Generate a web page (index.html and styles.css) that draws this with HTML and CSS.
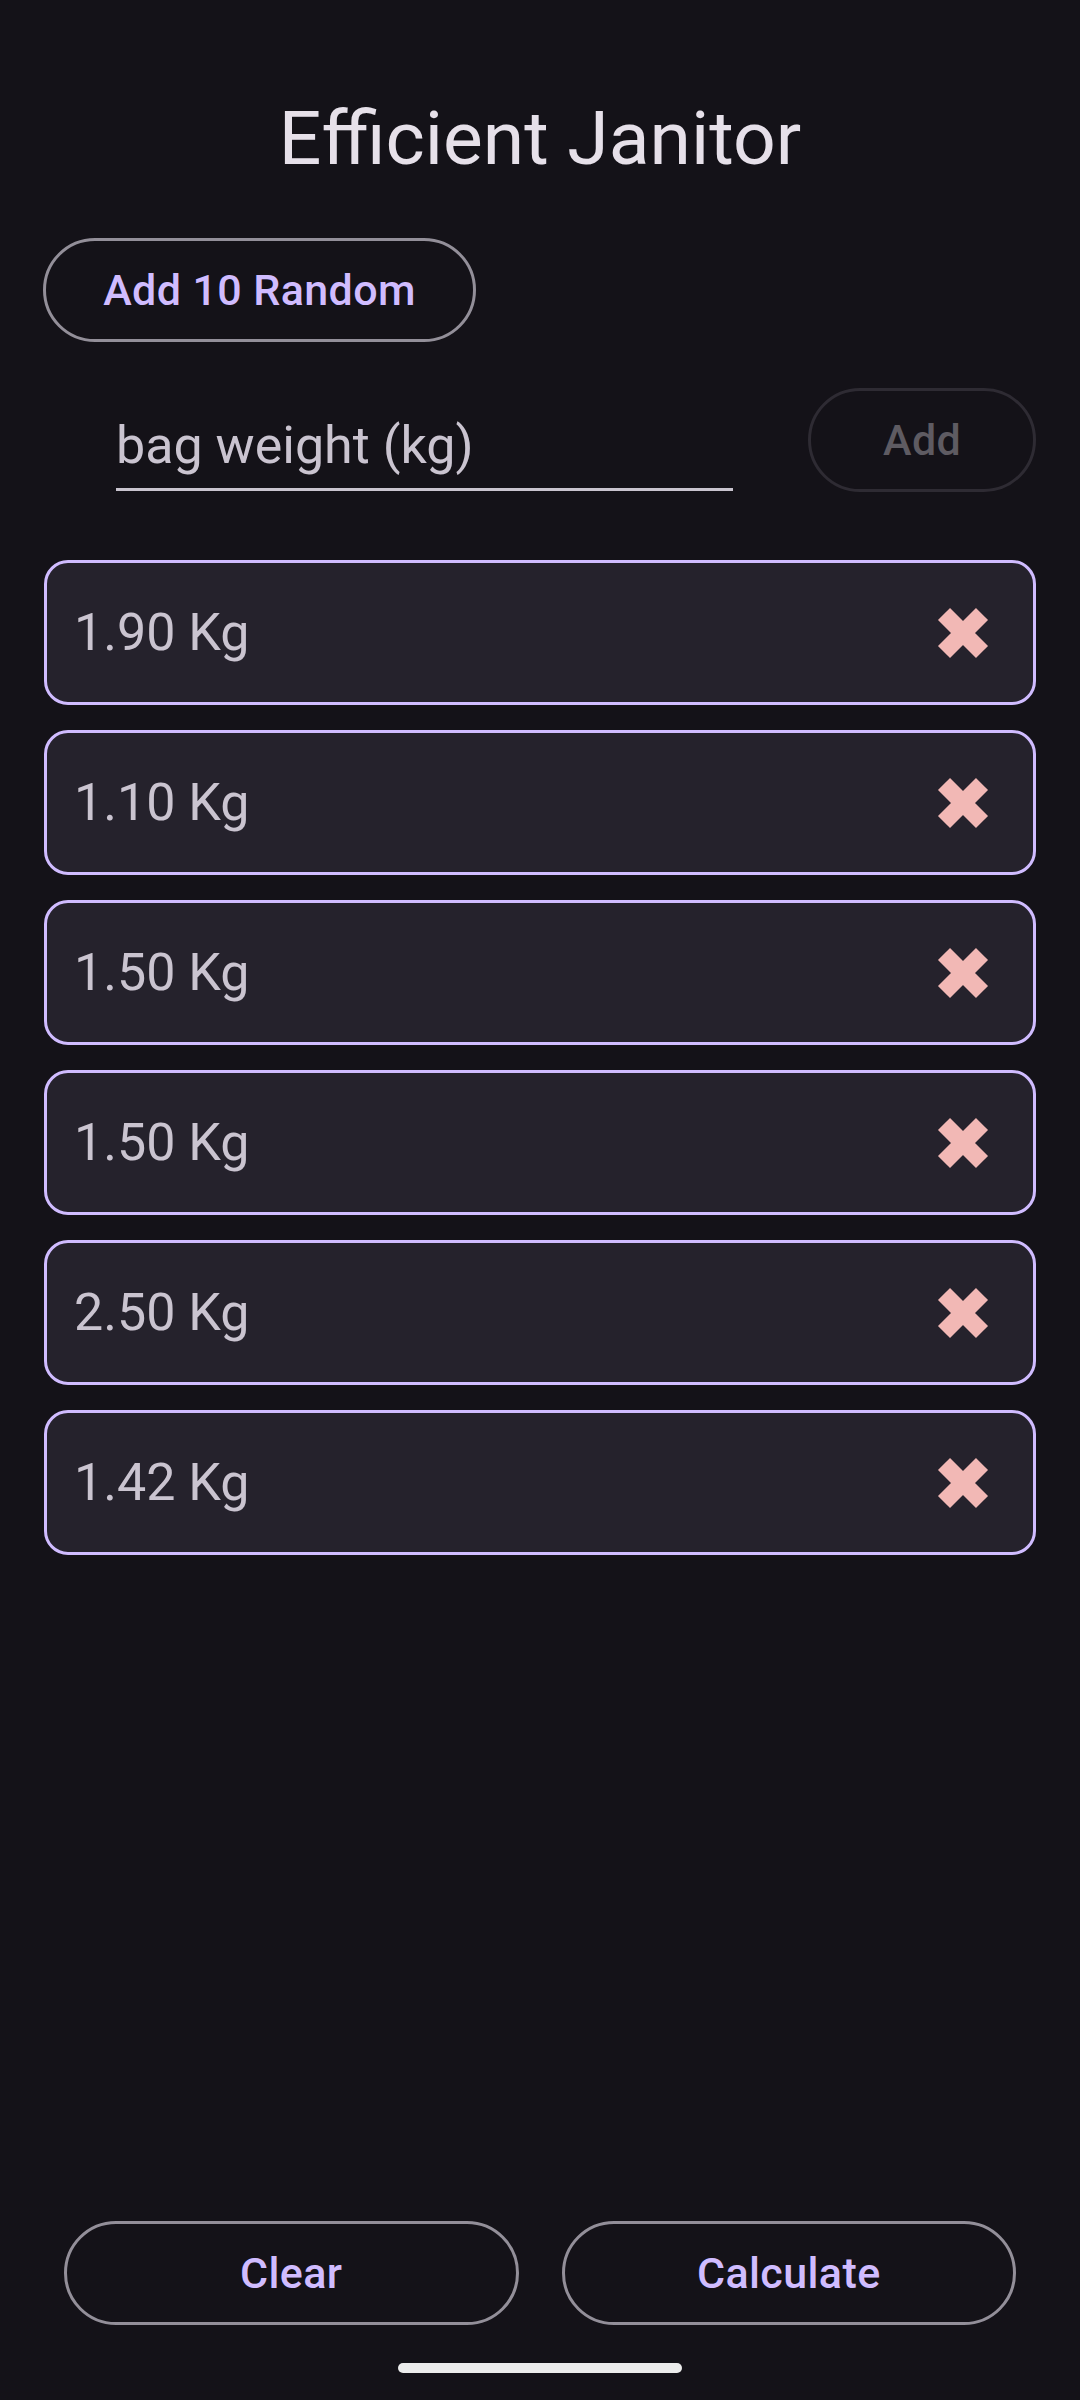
FILE: index.html
```html
<!DOCTYPE html>
<html>
<head>
<meta charset="utf-8">
<link rel="stylesheet" href="styles.css">
</head>
<body>
<div class="page">
  <h1 class="title">Efficient Janitor</h1>
  <div class="top-actions">
    <button class="btn btn-outline random">Add 10 Random</button>
  </div>
  <div class="input-row">
    <div class="field"><span class="placeholder">bag weight (kg)</span></div>
    <button class="btn btn-disabled add">Add</button>
  </div>
  <ul class="list">
    <li class="item"><span class="weight">1.90 Kg</span><svg class="del" viewBox="0 0 52 52"><path d="M7 7L45 45M45 7L7 45"/></svg></li>
    <li class="item"><span class="weight">1.10 Kg</span><svg class="del" viewBox="0 0 52 52"><path d="M7 7L45 45M45 7L7 45"/></svg></li>
    <li class="item"><span class="weight">1.50 Kg</span><svg class="del" viewBox="0 0 52 52"><path d="M7 7L45 45M45 7L7 45"/></svg></li>
    <li class="item"><span class="weight">1.50 Kg</span><svg class="del" viewBox="0 0 52 52"><path d="M7 7L45 45M45 7L7 45"/></svg></li>
    <li class="item"><span class="weight">2.50 Kg</span><svg class="del" viewBox="0 0 52 52"><path d="M7 7L45 45M45 7L7 45"/></svg></li>
    <li class="item"><span class="weight">1.42 Kg</span><svg class="del" viewBox="0 0 52 52"><path d="M7 7L45 45M45 7L7 45"/></svg></li>
  </ul>
  <div class="bottom-row">
    <button class="btn btn-outline">Clear</button>
    <button class="btn btn-outline">Calculate</button>
  </div>
  <div class="home-bar"></div>
</div>
</body>
</html>
```
FILE: styles.css
```css
* { box-sizing: border-box; }
html, body {
  margin: 0;
  padding: 0;
  background: #141218;
  font-family: Roboto, "Noto Sans", sans-serif;
}
.page {
  width: 1080px;
  height: 2400px;
  display: flex;
  flex-direction: column;
  padding: 0 44px;
}
.title {
  margin: 93px 0 0;
  font-size: 75px;
  font-weight: 400;
  line-height: 90px;
  text-align: center;
  color: #E6E0E9;
}
.top-actions {
  display: flex;
  margin-top: 55px;
}
.btn {
  font-family: Roboto, "Noto Sans", sans-serif;
  font-weight: 500;
  font-size: 43px;
  letter-spacing: 0.4px;
  height: 104px;
  border-radius: 52px;
  background: transparent;
  display: flex;
  align-items: center;
  justify-content: center;
  padding: 0;
}
.btn-outline {
  border: 3px solid #938F99;
  color: #D0BCFF;
}
.btn-disabled {
  border: 3px solid #2E2B33;
  color: #5E5B62;
}
.random { width: 433px; margin-left: -1px; }
.input-row {
  display: flex;
  align-items: flex-start;
  margin-top: 46px;
}
.field {
  margin: 0 75px 0 72px;
  width: 618px;
  height: 103px;
  border-bottom: 3px solid #C9C4CF;
  display: flex;
  align-items: flex-end;
  padding-bottom: 11px;
}
.placeholder {
  font-size: 52px;
  color: #CAC4D0;
  line-height: 1.17;
}
.add { width: 228px; margin-top: 0; }
.list {
  list-style: none;
  margin: 68px 0 0;
  padding: 0;
  display: flex;
  flex-direction: column;
  gap: 25px;
}
.item {
  height: 145px;
  background: #25222C;
  border: 3px solid #D0BCFF;
  border-radius: 24px;
  display: flex;
  align-items: center;
  justify-content: space-between;
  padding: 0 44px 0 27px;
}
.weight {
  font-size: 52px;
  color: #CAC4D0;
}
.del {
  width: 52px;
  height: 52px;
  overflow: visible;
  fill: none;
  stroke: #F2B8B5;
  stroke-width: 17;
  stroke-linecap: butt;
}
.bottom-row {
  margin-top: auto;
  display: flex;
  gap: 43px;
  padding: 0 20px;
}
.bottom-row .btn { flex: 1; }
.home-bar {
  margin: 38px auto 27px;
  width: 284px;
  height: 10px;
  border-radius: 5px;
  background: #ECECEC;
}
```
